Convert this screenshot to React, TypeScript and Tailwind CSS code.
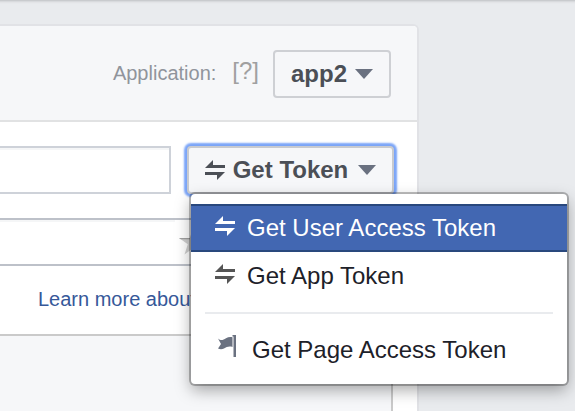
import type { ReactNode } from "react";

function SwapIcon({ className = "" }: { className?: string }) {
  return (
    <svg viewBox="0 0 20 20" width="20" height="20" className={`shrink-0 ${className}`} aria-hidden="true">
      <path d="M8 0V5H20V8H0ZM0 12H20L12 20V15H0Z" fill="currentColor" />
    </svg>
  );
}

function FlagIcon() {
  return (
    <svg viewBox="0 0 18 22" width="18" height="22" className="shrink-0" aria-hidden="true">
      <path d="M0 3.500C3 6 5 5 8 3.200 10 2 12 1.800 14.500 2.200V12C11 11 8.500 12 6 13.500 4 14.500 2 14.500 0 13.500L3 9Z" fill="#6a7180" />
      <path d="M14.500 0H18V22H15.500V1.500H14.500Z" fill="#6a7180" />
    </svg>
  );
}

function Caret() {
  return (
    <svg viewBox="0 0 18 10" width="18" height="10" className="shrink-0" aria-hidden="true">
      <path d="M0 0H18L9 10Z" fill="#6a7180" />
    </svg>
  );
}

function StarIcon() {
  return (
    <svg viewBox="0 0 28 28" width="28" height="28" aria-hidden="true">
      <path d="M14 0 17.200 10H28L19.200 16.300 22.500 26.500 14 20.300 5.500 26.500 8.800 16.300 0 10H10.800Z" fill="#cfcfcf" />
      <path d="M0 10H10.800L11 11.200H1.700Z" fill="#a0a0a0" />
    </svg>
  );
}

function MenuItem({ children, active = false }: { children: ReactNode; active?: boolean }) {
  return (
    <button
      type="button"
      role="menuitem"
      className={`flex h-12 w-full items-center border-y-2 px-6 text-left text-2xl ${
        active ? "border-[#29487d] bg-[#4267b2] text-white" : "border-transparent text-[#1d2129]"
      }`}
    >
      {children}
    </button>
  );
}

function TokenMenu() {
  return (
    <div
      role="menu"
      className="absolute top-12 left-1 z-10 w-[376px] rounded-[4px] bg-white py-[10px] shadow-[0_0_0_2px_rgba(0,0,0,0.25),0_6px_16px_rgba(0,0,0,0.35)]"
    >
      <MenuItem active>
        <SwapIcon className="mr-3 mb-1" />
        Get User Access Token
      </MenuItem>
      <MenuItem>
        <SwapIcon className="mr-3 mb-1 text-[#555]" />
        Get App Token
      </MenuItem>
      <hr className="mx-[14px] my-3 border-t-2 border-[#e9ebee]" />
      <MenuItem>
        <span className="mr-4 mb-2 ml-[3px]">
          <FlagIcon />
        </span>
        Get Page Access Token
      </MenuItem>
    </div>
  );
}

export default function App() {
  return (
    <div className="min-h-screen overflow-hidden bg-[#e9ebee] pt-6 font-['Liberation_Sans',Arial,sans-serif] shadow-[inset_0_5px_3px_-4px_#b9babd]">
      <main className="mr-[156px] flex min-h-[calc(100vh-24px)] flex-col rounded-tr-md border-t-2 border-r-2 border-[#e1e2e6] bg-white">
        <header className="flex items-start justify-end rounded-tr-[4px] border-b-2 border-[#e1e2e3] bg-[#f6f7f9] pt-6 pr-[26px] pb-[22px]">
          <span className="mr-4 text-xl leading-[46px] text-[#90949c]">Application:</span>
          <a href="#help" className="mr-[14px] text-2xl leading-[42px] text-[#a0a0a0]">
            [?]
          </a>
          <button
            type="button"
            className="flex h-12 w-[118px] items-center justify-center gap-2 rounded-[4px] border-2 border-[#ced0d4] bg-[#f6f7f9] text-2xl font-bold text-[#4b4f56]"
          >
            app2
            <Caret />
          </button>
        </header>

        <section className="flex py-6 pr-[23px]">
          <input
            type="text"
            aria-label="Access token"
            className="mr-4 h-12 min-w-0 flex-1 border-2 border-l-0 border-[#ced2d9] bg-white px-3 text-xl shadow-[inset_0_2px_0_#f5f6f7] outline-none"
          />
          <div className="relative">
            <button
              type="button"
              aria-haspopup="menu"
              aria-expanded="true"
              className="flex h-12 w-[207px] items-center justify-center rounded-[4px] border-2 border-[#c8cacf] bg-[#f6f7f9] text-2xl font-bold text-[#4b4f56] shadow-[0_0_2px_3px_#7ba5f8]"
            >
              <SwapIcon className="mr-2" />
              <span className="mr-[10px]">Get Token</span>
              <Caret />
            </button>
            <TokenMenu />
          </div>
        </section>

        <section className="mr-6 flex h-12 items-center border-y-2 border-[#bdc1c9]">
          <input
            type="text"
            aria-label="Query path"
            className="h-11 min-w-0 flex-1 bg-white px-3 text-xl shadow-[inset_0_2px_0_#f5f6f7] outline-none"
          />
          <button type="button" aria-label="Save query" className="mr-[186px] ml-1">
            <StarIcon />
          </button>
        </section>

        <p className="mr-6 border-b-2 border-[#cacaca] pb-[2px] pl-[38px] text-xl leading-[66px] whitespace-nowrap text-[#365899]">
          <a href="#syntax">Learn more about the Graph API</a>
        </p>
        <div className="mr-6 flex-1 border-r-2 border-[#cacaca] bg-[#f6f7f9]" />
      </main>
    </div>
  );
}
